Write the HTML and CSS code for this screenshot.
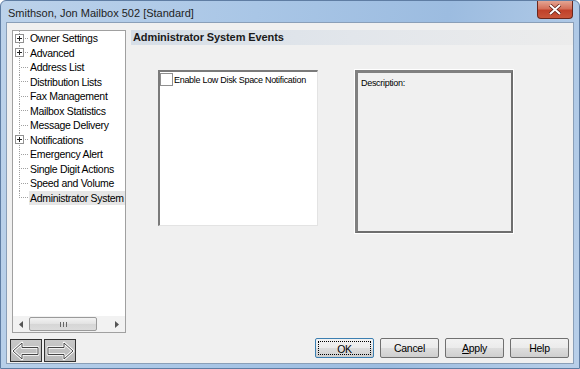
FILE: index.html
```html
<!DOCTYPE html>
<html>
<head>
  <title>Smithson, Jon Mailbox 502 [Standard]</title>
  <link rel="stylesheet" href="styles.css">
</head>
<body>
  <div class="window">
    <div class="titlebar">
      <span class="title">Smithson, Jon Mailbox 502 [Standard]</span>
      <span class="close">
        <svg width="14" height="11" viewBox="0 0 14 11"><path d="M2 1 L12 10 M12 1 L2 10" stroke="#5a1a10" stroke-width="3.4"/><path d="M2 1 L12 10 M12 1 L2 10" stroke="#fff" stroke-width="2"/></svg>
      </span>
    </div>
    <div class="client">
      <div class="main">
        <div class="tree">
          <div class="nodes">
            <div class="node plus"><span class="branch"><svg class="exp" width="9" height="9" viewBox="0 0 9 9"><rect x="0.5" y="0.5" width="8" height="8" fill="#fff" stroke="#919191"/><path d="M2 4.5 H7 M4.5 2 V7" stroke="#222"/></svg></span><span class="label">Owner Settings</span></div>
            <div class="node plus"><span class="branch"><svg class="exp" width="9" height="9" viewBox="0 0 9 9"><rect x="0.5" y="0.5" width="8" height="8" fill="#fff" stroke="#919191"/><path d="M2 4.5 H7 M4.5 2 V7" stroke="#222"/></svg></span><span class="label">Advanced</span></div>
            <div class="node"><span class="branch"></span><span class="label">Address List</span></div>
            <div class="node"><span class="branch"></span><span class="label">Distribution Lists</span></div>
            <div class="node"><span class="branch"></span><span class="label">Fax Management</span></div>
            <div class="node"><span class="branch"></span><span class="label">Mailbox Statistics</span></div>
            <div class="node"><span class="branch"></span><span class="label">Message Delivery</span></div>
            <div class="node plus"><span class="branch"><svg class="exp" width="9" height="9" viewBox="0 0 9 9"><rect x="0.5" y="0.5" width="8" height="8" fill="#fff" stroke="#919191"/><path d="M2 4.5 H7 M4.5 2 V7" stroke="#222"/></svg></span><span class="label">Notifications</span></div>
            <div class="node"><span class="branch"></span><span class="label">Emergency Alert</span></div>
            <div class="node"><span class="branch"></span><span class="label">Single Digit Actions</span></div>
            <div class="node"><span class="branch"></span><span class="label">Speed and Volume</span></div>
            <div class="node last selected"><span class="branch"></span><span class="label">Administrator System Events</span></div>
          </div>
          <div class="hscroll">
            <span class="arrow">
              <svg width="4" height="7" viewBox="0 0 4 7"><path d="M4 0 L0 3.5 L4 7 Z" fill="#555"/></svg>
            </span>
            <span class="track">
              <span class="thumb"><span class="grip"></span></span>
            </span>
            <span class="arrow">
              <svg width="4" height="7" viewBox="0 0 4 7"><path d="M0 0 L4 3.5 L0 7 Z" fill="#555"/></svg>
            </span>
          </div>
        </div>
        <div class="panel">
          <div class="panel-head">Administrator System Events</div>
          <div class="panel-body">
            <div class="listbox">
              <label class="check"><span class="box"></span>Enable Low Disk Space Notification</label>
            </div>
            <div class="desc">Description:</div>
          </div>
        </div>
      </div>
      <div class="footer">
        <div class="nav">
          <button class="navbtn">
            <svg width="30" height="20" viewBox="0 0 30 20"><path d="M2 10 L11 2 L11 6.5 L27 6.5 L27 13.5 L11 13.5 L11 18 Z" fill="none" stroke="#fff" stroke-width="2.6" stroke-linejoin="round"/><path d="M2 10 L11 2 L11 6.5 L27 6.5 L27 13.5 L11 13.5 L11 18 Z" fill="none" stroke="#444" stroke-width="1"/></svg>
          </button>
          <button class="navbtn">
            <svg width="30" height="20" viewBox="0 0 30 20"><path d="M28 10 L19 2 L19 6.5 L3 6.5 L3 13.5 L19 13.5 L19 18 Z" fill="none" stroke="#fff" stroke-width="2.6" stroke-linejoin="round"/><path d="M28 10 L19 2 L19 6.5 L3 6.5 L3 13.5 L19 13.5 L19 18 Z" fill="none" stroke="#444" stroke-width="1"/></svg>
          </button>
        </div>
        <div class="actions">
          <button class="btn default"><span class="focus">OK</span></button>
          <button class="btn">Cancel</button>
          <button class="btn"><u>A</u>pply</button>
          <button class="btn">Help</button>
        </div>
      </div>
    </div>
  </div>
</body>
</html>
```
FILE: styles.css
```css
body
{
  margin: 0;
  font-family: "Liberation Sans", Arial, sans-serif;
  font-size: 11px;
  color: #000;
  background: #fff;
}
.window
{
  width: 580px;
  height: 369px;
  box-sizing: border-box;
  border: 1px solid #5f7da3;
  border-radius: 6px 6px 0 0;
  background: linear-gradient(100deg, #bcd2ea 0%, #a9c6e6 40%, #9cbce0 70%, #b8cfe9 100%);
  display: flex;
  flex-direction: column;
  padding: 0 5px 4px 5px;
}
.titlebar
{
  height: 21px;
  display: flex;
  align-items: center;
  justify-content: space-between;
}
.title
{
  font-size: 11px;
  color: #1e1e1e;
  padding-left: 2px;
  margin-top: 2px;
}
.close
{
  width: 34px;
  height: 17px;
  margin-top: -4px;
  margin-right: 1px;
  border: 1px solid #6a261c;
  border-top: none;
  border-radius: 0 0 4px 4px;
  background: linear-gradient(#e4a593 0%, #d4705a 45%, #c0412a 55%, #c9553a 100%);
  display: flex;
  align-items: center;
  justify-content: center;
}
.client
{
  flex: 1;
  background: #f0f0f0;
  border: 1px solid #8a9fb8;
  padding: 7px 0 0 5px;
  display: flex;
  flex-direction: column;
}
.main
{
  display: flex;
  gap: 5px;
  height: 303px;
}
.tree
{
  width: 114px;
  box-sizing: border-box;
  border: 1px solid #a0a0a0;
  background: #fff;
  display: flex;
  flex-direction: column;
  overflow: hidden;
}
.nodes
{
  flex: 1;
  overflow: hidden;
}
.node
{
  height: 14.5px;
  display: flex;
  align-items: center;
  white-space: nowrap;
  font-size: 10.5px;
  letter-spacing: -0.3px;
}
.branch
{
  flex: none;
  width: 14px;
  height: 100%;
  margin-left: 2px;
  display: flex;
  align-items: center;
  background-image:
    repeating-linear-gradient(to bottom, #a0a0a0 0 1px, transparent 1px 2px),
    repeating-linear-gradient(to right, #a0a0a0 0 1px, transparent 1px 2px);
  background-size: 1px 100%, 8px 1px;
  background-position: 4px 0, 6px 50%;
  background-repeat: no-repeat;
}
.node.last .branch
{
  background-size: 1px 50%, 8px 1px;
}
.exp
{
  display: block;
}
.label
{
  padding: 0 2px 0 1px;
  line-height: 14px;
}
.node.selected .label
{
  background: #e6e6e6;
  padding-right: 20px;
}
.hscroll
{
  height: 16px;
  display: flex;
  background: #f2f2f2;
  border-top: 1px solid #fff;
}
.arrow
{
  width: 16px;
  display: flex;
  align-items: center;
  justify-content: center;
}
.track
{
  flex: 1;
  display: flex;
  align-items: center;
}
.thumb
{
  width: 68px;
  height: 14px;
  box-sizing: border-box;
  border: 1px solid #9a9a9a;
  border-radius: 2px;
  background: linear-gradient(#f3f3f3, #e2e2e2 50%, #d6d6d6 51%, #dcdcdc);
  display: flex;
  align-items: center;
  justify-content: center;
}
.grip
{
  width: 7px;
  height: 5px;
  background: repeating-linear-gradient(to right, #666 0 1px, transparent 1px 3px);
}
.panel
{
  flex: 1;
  display: flex;
  flex-direction: column;
}
.panel-head
{
  height: 15px;
  line-height: 15px;
  padding-left: 2px;
  font-weight: bold;
  font-size: 11px;
  letter-spacing: -0.1px;
  color: #1a1a1a;
  background: linear-gradient(to right, #d6dee7, #e2e6eb 50%, #ececec);
}
.panel-body
{
  display: flex;
  align-items: flex-start;
  padding: 25px 0 0 27px;
}
.listbox
{
  width: 160px;
  height: 156px;
  box-sizing: border-box;
  background: #fff;
  border-style: solid;
  border-width: 2px 1px 1px 2px;
  border-color: #7a7a7a #e3e3e3 #e3e3e3 #7a7a7a;
  padding: 1px 0 0 0;
}
.check
{
  display: flex;
  align-items: center;
  gap: 1px;
  white-space: nowrap;
  font-size: 9px;
  letter-spacing: -0.3px;
}
.box
{
  width: 11px;
  height: 11px;
  border: 1px solid #8f8f8f;
  background: #fff;
}
.desc
{
  margin-left: 37px;
  width: 158px;
  height: 163px;
  box-sizing: border-box;
  border-style: solid;
  border-width: 3px 2px 2px 3px;
  border-color: #808080 #6e6e6e #6e6e6e #808080;
  outline: 1px solid #fff;
  padding: 5px 3px;
  font-size: 9px;
  letter-spacing: -0.3px;
}
.footer
{
  display: flex;
  justify-content: space-between;
  align-items: flex-start;
  margin-top: 5px;
  margin-right: 4px;
}
.nav
{
  display: flex;
  gap: 2px;
  margin-left: -2px;
  margin-top: 1px;
}
.navbtn
{
  width: 32px;
  height: 23px;
  padding: 0;
  border: 1px solid #333;
  background: linear-gradient(#c8c8c8, #b8b8b8);
  display: flex;
  align-items: center;
  justify-content: center;
}
.actions
{
  display: flex;
  gap: 6px;
}
.btn
{
  width: 59px;
  height: 20px;
  padding: 0;
  font-family: "Liberation Sans", Arial, sans-serif;
  font-size: 10.5px;
  letter-spacing: -0.3px;
  color: #000;
  border: 1px solid #707070;
  border-radius: 2px;
  background: linear-gradient(#f2f2f2 0%, #ebebeb 50%, #dddddd 51%, #cfcfcf 100%);
}
.btn.default
{
  border-color: #3c7fb1;
  padding: 2px;
}
.focus
{
  display: block;
  height: 100%;
  box-sizing: border-box;
  border: 1px dotted #000;
  line-height: 14px;
}
```
